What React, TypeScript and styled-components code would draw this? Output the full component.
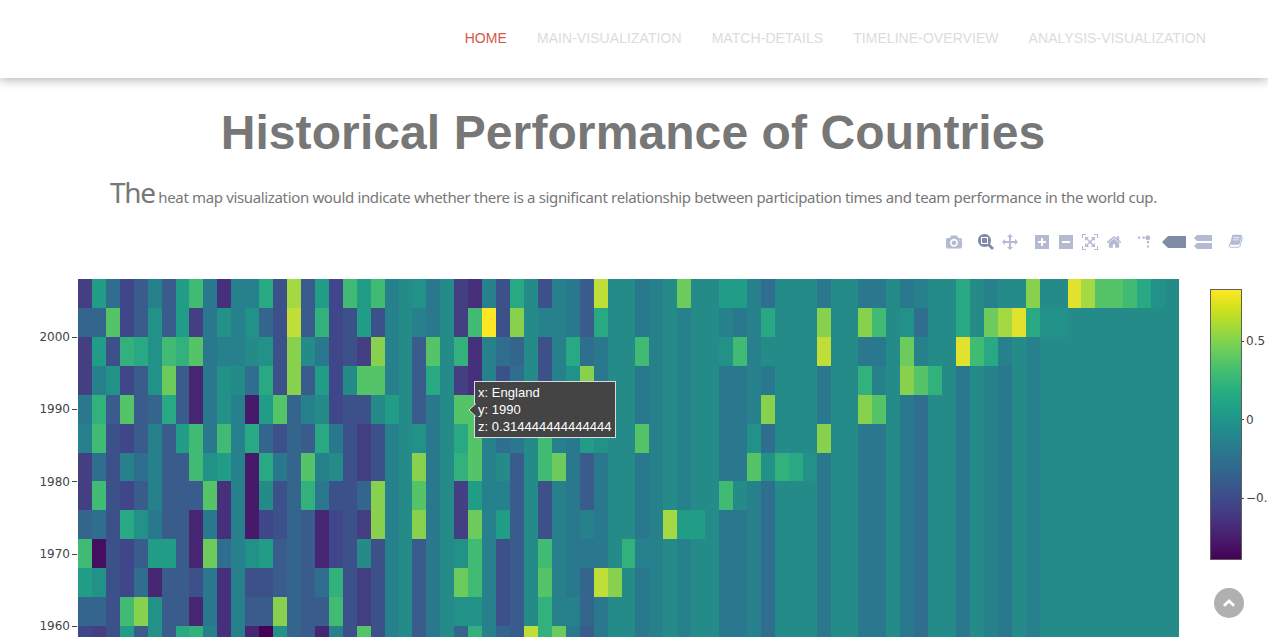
import React from 'react';
import styled, { createGlobalStyle } from 'styled-components';

const GlobalStyle = createGlobalStyle`
  * { box-sizing: border-box; }
  body { margin: 0; background: #fff; }
`;

const Page = styled.div`
  display: flex;
  flex-direction: column;
  width: 1268px;
  height: 637px;
  overflow: hidden;
  position: relative;
  background: #fff;
  font-family: 'Liberation Sans', Arial, sans-serif;
`;

const Header = styled.header`
  flex: none;
  height: 78px;
  background: #fff;
  box-shadow: 0 2px 10px rgba(0, 0, 0, 0.3);
`;

const Nav = styled.nav`
  display: flex;
  justify-content: flex-end;
  align-items: center;
  gap: 30px;
  height: 76px;
  padding-right: 62px;
`;

const NavLink = styled.a<{ $active?: boolean }>`
  font-size: 14px;
  line-height: 20px;
  letter-spacing: 0.06px;
  white-space: nowrap;
  color: ${(p) => (p.$active ? '#d4574a' : '#dcdcdc')};
`;

const Title = styled.h1`
  margin: 27px 0 0;
  padding-right: 2px;
  font-size: 48px;
  line-height: 56px;
  font-weight: 700;
  letter-spacing: 0.09px;
  text-align: center;
  color: #777;
  white-space: nowrap;
`;

const Intro = styled.p`
  margin: 8px 0 1px;
  padding-left: 110px;
  height: 46px;
  line-height: 46px;
  font-family: 'Noto Sans', 'Open Sans', sans-serif;
  font-size: 15px;
  letter-spacing: -0.35px;
  color: #777;
  white-space: nowrap;
`;

const Lead = styled.span`
  font-size: 28px;
  letter-spacing: -1.3px;
`;

const ModeBar = styled.div`
  display: flex;
  justify-content: flex-end;
  gap: 16px;
  height: 16px;
  margin-top: 18px;
  padding-right: 25px;
`;

const ModeGroup = styled.div`
  display: flex;
  gap: 8px;
`;

const ModeIcon = styled.svg<{ $active?: boolean }>`
  display: block;
  height: 16px;
  fill: ${(p) => (p.$active ? '#7f8ba7' : '#b3bad2')};
`;

const Plot = styled.div`
  display: flex;
  align-items: flex-start;
  margin-top: 29px;
`;

const YAxis = styled.div`
  flex: none;
  width: 78px;
  padding-top: 22px;
`;

const YTick = styled.div`
  display: flex;
  justify-content: flex-end;
  align-items: center;
  gap: 2px;
  height: 72.3px;
  padding-right: 1px;
  font-family: 'DejaVu Sans', Verdana, sans-serif;
  font-size: 12px;
  color: #444;
`;

const TickMark = styled.i<{ $length: number }>`
  flex: none;
  width: ${(p) => p.$length}px;
  height: 1px;
  background: #444;
`;

const HeatGrid = styled.div`
  flex: none;
  display: grid;
  width: 1101px;
  grid-template-columns: repeat(79, 1fr);
  grid-auto-rows: 28.93px;
`;

const Cell = styled.div<{ $color: string }>`
  background: ${(p) => p.$color};
`;

const Legend = styled.div`
  display: flex;
  margin: 10px 0 0 31px;
`;

const ColorBar = styled.div`
  width: 32px;
  height: 271px;
  border: 1px solid #5c6058;
  background: linear-gradient(
    to top,
    #440154 0%, #48186a 6.27%, #472d7b 12.55%, #424086 18.82%, #3b528b 25.1%,
    #33638d 31.37%, #2c728e 37.65%, #26828e 43.92%, #21918c 50.2%, #1fa088 56.47%,
    #28ae80 62.75%, #3fbc73 69.02%, #5ec962 75.29%, #84d44b 81.57%, #addc30 87.84%,
    #d8e219 94.12%, #fde725 100%
  );
`;

const Scale = styled.div`
  padding-top: 13px;
`;

const ScaleTick = styled.div`
  display: flex;
  align-items: center;
  gap: 2px;
  height: 78.5px;
  font-family: 'DejaVu Sans', Verdana, sans-serif;
  font-size: 12px;
  color: #444;
  white-space: nowrap;
`;

const Tooltip = styled.div`
  position: absolute;
  left: 474px;
  top: 381px;
  width: 142px;
  height: 57px;
  padding: 3px 0 0 3px;
  border: 1px solid #d6dcd9;
  background: #444;
  color: #fff;
  font-size: 13px;
  line-height: 16.9px;
  letter-spacing: 0.03px;
  white-space: nowrap;
`;

const Pointer = styled.svg`
  position: absolute;
  left: -7px;
  top: 21px;
  width: 8px;
  height: 14px;
`;

const BackToTop = styled.button`
  position: absolute;
  right: 24px;
  bottom: 19px;
  width: 30px;
  height: 30px;
  padding: 0;
  border: 0;
  border-radius: 50%;
  background: #b0b0b0;

  svg {
    display: block;
    margin: auto;
  }
`;

/* Viridis colour ramp, one letter per step: a is the lowest value, z the highest. */
const RAMP = [
  '#440154', '#461060', '#46196a', '#472774', '#46307b', '#443e83', '#40468a', '#3c518a', '#395c8c',
  '#34658d', '#2f6e8e', '#2a788e', '#27818d', '#258b89', '#229289', '#219c87', '#28a883', '#32b17c',
  '#41bb73', '#55c469', '#6ccb5c', '#88d14f', '#a5d944', '#bfde38', '#e0e22e', '#fde725',
];

const MID = 'lmnmnnllmknnnlnnllnl';
const TAIL = 'knnlnmlnmnnnnnnnnnn';

const ROWS = [
  'fpkgimipslemmqhwipgs' + 'psmnolnfemhqnhmlixnn' + 'lmnunnppmknnnlnnllnl' + 'mnnqnmnnvnnywttsqon',
  'jjtgioipflomojhxirgh' + 'phmnmlnfszhvnmmliqnn' + 'lmnmnnmlmqnnnvnnvsno' + 'knnqnuwyqoonnnnnnnn',
  'fphrqosrtlmmnohvnlgh' + 'fvmnitnremkjnhmqklnn' + 'smnmnnosmnnnnxnnllnu' + 'mnnysqmnmnnnnnnnnnn',
  'fmogiouidlonkqhvipgn' + 'ttmniqnfemhknhmovlnn' + 'lmnmnnllmlnnnlnnrmnv' + 'trnlnmlnmnnnnnnnnnn',
  'lritijqidlomcptjmngh' + 'hnpnilnttmhknhmlilnn' + 'lmnmnnllmvnnnlnnvtnl' + TAIL,
  'mshgimipslsmqjhjiqlh' + 'fhmnolnqtmklnsmlponn' + 'tmnmnnlloknnnvnnllnl' + TAIL,
  'fkhmkmiisopmcqljtmnh' + 'fhmnvlnrtmninsulilnn' + 'lmnmnnlltorqolnnllnl' + TAIL,
  'fshgimiiitemcnhjrlhh' + 'jvmntlnfpmminhmlilnn' + 'lmnmnnsnmknnnlnnllnl' + TAIL,
  'jkhqoliidlemcghjidgh' + 'fvmnvlnfumpinhmlmlnn' + 'lmwppnllmknnnlnnllnl' + TAIL,
  'sbhgippidukmopijidgh' + 'nhmnilnosmhinsmlllnr' + 'mmnmnnllmknnnlnnllnl' + TAIL,
  'pohgkdiihlemhhijikrh' + 'fhmnilnusmhintmljxvn' + MID + TAIL,
  'jjhsvoiidlemiivjiish' + 'fhmnilnoomhinrmmjlnn' + MID + TAIL,
  'gfhpioiqrmemdaojidmh' + 'thmnilnjrmjixrulilnn' + MID + TAIL,
];

const ICONS = {
  camera: {
    w: 1000,
    d: 'm500 450c-83 0-150-67-150-150 0-83 67-150 150-150 83 0 150 67 150 150 0 83-67 150-150 150z m400 150h-120c-16 0-34 13-39 29l-31 93c-6 15-23 28-40 28h-340c-16 0-34-13-39-28l-31-94c-6-15-23-28-40-28h-120c-55 0-100-45-100-100v-450c0-55 45-100 100-100h800c55 0 100 45 100 100v450c0 55-45 100-100 100z m-400-550c-138 0-250 112-250 250 0 138 112 250 250 250 138 0 250-112 250-250 0-138-112-250-250-250z m365 380c-19 0-35 16-35 35 0 19 16 35 35 35 19 0 35-16 35-35 0-19-16-35-35-35z',
  },
  zoom: {
    w: 1000,
    d: 'm1000-25l-250 251c40 63 63 138 63 218 0 224-182 406-407 406-224 0-406-182-406-406s183-406 407-406c80 0 155 22 218 62l250-250 125 125z m-812 250l0 438 437 0 0-438-437 0z m62 375l313 0 0-312-313 0 0 312z',
  },
  pan: {
    w: 1000,
    d: 'm1000 350l-187 188 0-125-250 0 0 250 125 0-188 187-187-187 125 0 0-250-250 0 0 125-188-188 186-187 0 125 252 0 0-250-125 0 187-188 188 188-125 0 0 250 250 0 0-126 187 188z',
  },
  plus: {
    w: 875,
    d: 'm1 787l0-875 875 0 0 875-875 0z m687-500l-187 0 0-187-125 0 0 187-188 0 0 125 188 0 0 187 125 0 0-187 187 0 0-125z',
  },
  minus: { w: 875, d: 'm0 788l0-876 875 0 0 876-875 0z m688-500l-500 0 0 125 500 0 0-125z' },
  autoscale: {
    w: 1000,
    d: 'm250 850l-187 0-63 0 0-62 0-188 63 0 0 188 187 0 0 62z m688 0l-188 0 0-62 188 0 0-188 62 0 0 188 0 62-62 0z m-875-938l0 188-63 0 0-188 0-62 63 0 187 0 0 62-187 0z m875 188l0-188-188 0 0-62 188 0 62 0 0 62 0 188-62 0z m-125 188l-1 0-93-94-156 156 156 156 92-93 2 0 0 250-250 0 0-2 93-92-156-156-156 156 94 92 0 2-250 0 0-250 0 0 93 93 157-156-157-156-93 94 0 0 0-250 250 0 0 0-94 93 156 157 156-157-93-93 0 0 250 0 0 250z',
  },
  home: {
    w: 928.6,
    d: 'm786 296v-267q0-15-11-26t-25-10h-214v214h-143v-214h-214q-15 0-25 10t-11 26v267q0 1 0 2t0 2l321 264 321-264q1-1 1-4z m124 39l-34-41q-5-5-12-6h-2q-7 0-12 3l-386 322-386-322q-7-4-13-4-7 2-12 7l-35 41q-4 5-3 13t6 12l401 334q18 15 42 15t43-15l136-114v109q0 8 5 13t13 5h107q8 0 13-5t5-13v-227l122-102q5-5 6-12t-4-13z',
  },
  spike: {
    w: 1000,
    scale: 1.5,
    d: 'M512 409c0-57-46-104-103-104-57 0-104 47-104 104 0 57 47 103 104 103 57 0 103-46 103-103z m-327-39l92 0 0 92-92 0z m-185 0l92 0 0 92-92 0z m370-186l92 0 0 93-92 0z m0-184l92 0 0 92-92 0z',
  },
  closest: { w: 1500, d: 'm375 725l0 0-375-375 375-374 0-1 1125 0 0 750-1125 0z' },
  compare: {
    w: 1125,
    d: 'm187 786l0 2-187-188 188-187 0 0 937 0 0 373-938 0z m0-499l0 1-187-188 188-188 0 0 937 0 0 376-938-1z',
  },
};

type IconName = keyof typeof ICONS;

const PlotIcon = ({ name, active }: { name: IconName; active?: boolean }) => {
  const icon: { w: number; d: string; scale?: number } = ICONS[name];
  const s = icon.scale ?? 1;
  return (
    <ModeIcon $active={active} viewBox={`0 0 ${icon.w} 1000`} width={Math.max(16, (icon.w * 16) / 1000)}>
      <path d={icon.d} transform={`matrix(${s} 0 0 ${-s} 0 850)`} />
    </ModeIcon>
  );
};

const BookIcon = () => (
  <ModeIcon viewBox="0 0 15 16" width={15}>
    <path
      fillRule="evenodd"
      d="M5 0.8H13.2Q14.2 0.9 13.9 2L11.6 9.8Q11.3 10.8 10.3 10.8H1.8L4.1 1.8Q4.3 0.8 5 0.8ZM5.8 3.2L5.6 4H11.3L11.5 3.2ZM5.2 5.4L5 6.2H10.7L10.9 5.4Z"
    />
    <path
      d="M1.7 10Q0.4 13.2 2.2 13.2H10.6Q11.6 13.2 11.9 12.2L14.5 3.2"
      fill="none"
      stroke="#b3bad2"
      strokeWidth="1"
    />
  </ModeIcon>
);

const LINKS = ['HOME', 'MAIN-VISUALIZATION', 'MATCH-DETAILS', 'TIMELINE-OVERVIEW', 'ANALYSIS-VISUALIZATION'];
const YEARS = [2000, 1990, 1980, 1970, 1960];
const LEVELS = ['0.5', '0', '−0.'];
const GROUPS: IconName[][] = [
  ['camera'],
  ['zoom', 'pan'],
  ['plus', 'minus', 'autoscale', 'home'],
  ['spike', 'closest', 'compare'],
];

export default function App() {
  return (
    <>
      <GlobalStyle />
      <Page>
        <Header>
          <Nav>
            {LINKS.map((label, i) => (
              <NavLink key={label} $active={i === 0}>{label}</NavLink>
            ))}
          </Nav>
        </Header>
        <Title>Historical Performance of Countries</Title>
        <Intro>
          <Lead>The</Lead> heat map visualization would indicate whether there is a significant relationship between
          participation times and team performance in the world cup.
        </Intro>
        <ModeBar>
          {GROUPS.map((group) => (
            <ModeGroup key={group[0]}>
              {group.map((name) => (
                <PlotIcon key={name} name={name} active={name === 'zoom' || name === 'closest'} />
              ))}
            </ModeGroup>
          ))}
          <ModeGroup>
            <BookIcon />
          </ModeGroup>
        </ModeBar>
        <Plot>
          <YAxis>
            {YEARS.map((year) => (
              <YTick key={year}>
                {year}
                <TickMark $length={5} />
              </YTick>
            ))}
          </YAxis>
          <HeatGrid>
            {ROWS.map((row, r) =>
              row.split('').map((step, c) => <Cell key={`${r}-${c}`} $color={RAMP[step.charCodeAt(0) - 97]} />),
            )}
          </HeatGrid>
          <Legend>
            <ColorBar />
            <Scale>
              {LEVELS.map((level) => (
                <ScaleTick key={level}>
                  <TickMark $length={2} />
                  {level}
                </ScaleTick>
              ))}
            </Scale>
          </Legend>
        </Plot>
        <Tooltip>
          <Pointer viewBox="0 0 8 14">
            <path d="M8 0.5L1 7L8 13.5" fill="#444" stroke="#d6dcd9" />
          </Pointer>
          <div>x: England</div>
          <div>y: 1990</div>
          <div>z: 0.314444444444444</div>
        </Tooltip>
        <BackToTop aria-label="Back to top">
          <svg width="14" height="10" viewBox="0 0 14 10">
            <path d="M2 7.7L7 2.9L12 7.7" fill="none" stroke="#fff" strokeWidth="2.8" />
          </svg>
        </BackToTop>
      </Page>
    </>
  );
}
